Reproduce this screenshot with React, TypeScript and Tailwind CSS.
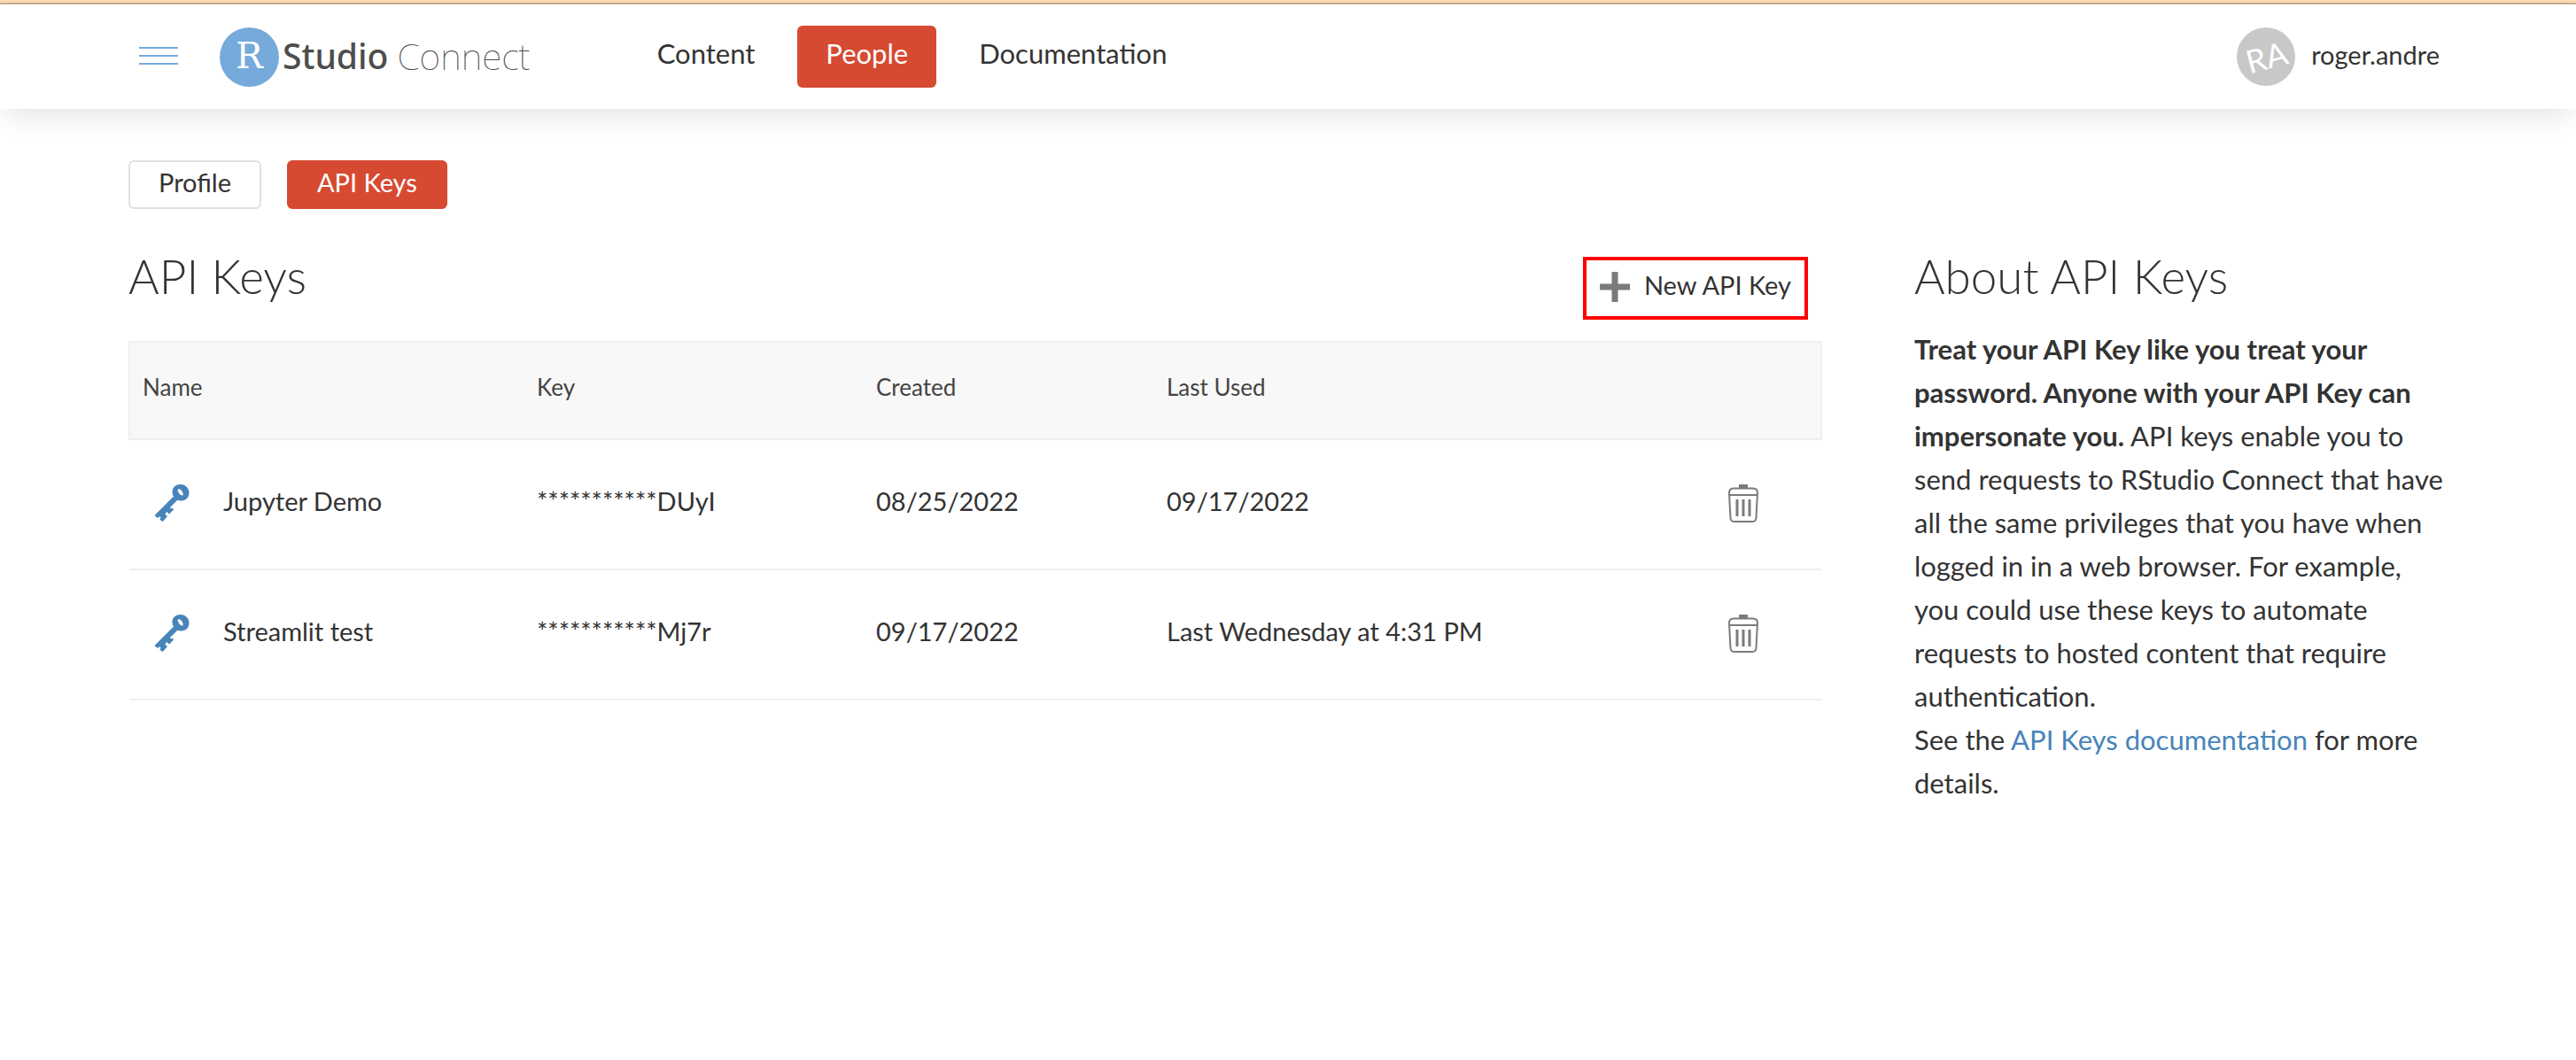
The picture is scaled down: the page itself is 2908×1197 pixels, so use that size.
import React from "react";

const keys = [
  { name: "Jupyter Demo", key: "***********DUyI", created: "08/25/2022", used: "09/17/2022" },
  { name: "Streamlit test", key: "***********Mj7r", created: "09/17/2022", used: "Last Wednesday at 4:31 PM" },
];

function KeyIcon() {
  return (
    <svg viewBox="0 0 40 42" className="h-[42px] w-10 shrink-0" fill="#4784ba" aria-hidden="true">
      <path
        fillRule="evenodd"
        d="M30 0C35.500 0 39.500 4.500 39.500 9.500S36 18.500 30.500 18.500 20.500 14 20.500 8.500 24.500 0 30 0zM27 5.500C25.500 7 29.500 13 32 12.500 34.500 11.500 30 3.500 27 5.500z"
      />
      <path d="M21.700 13.700L1 34.500V35.700L4.300 38 5.700 36.300 7.700 37.300 6.300 39.700 9.700 42 15 36 12.300 33.700 14.300 31 17 33.500 22 28.500 20.500 26.500 19 27.500 18 26 27 17z" />
    </svg>
  );
}

function TrashIcon() {
  return (
    <svg viewBox="0 0 34 44" className="h-11 w-[34px]" fill="none" stroke="#7b7b7b" strokeWidth="2" aria-hidden="true">
      <path d="M12 1h10v4H12z" fill="#7b7b7b" stroke="none" />
      <path d="M6 5.500h22q5 0 5 5l-1.500 28.500q-.5 4-4 4H6.500q-3.500 0-4-4L1 10.500q0-5 5-5z M1 13h32" />
      <path d="M10 18v19M17 18v19M24 18v19" strokeWidth="3" />
    </svg>
  );
}

export default function App() {
  return (
    <div className="min-h-screen bg-white font-['Lato',sans-serif] text-[#333]">
      <div className="h-[5px] border-b-2 border-[#c9ae8c] bg-[#ffdbb5]" />
      <header className="flex h-[118px] items-center pr-[154px] pl-[157px] shadow-[0_12px_30px_-6px_rgba(0,0,0,0.12)]">
        <button aria-label="Menu" className="flex flex-col gap-[7px] pb-0.5">
          <span className="h-0.5 w-11 bg-[#75aadb]" />
          <span className="h-0.5 w-11 bg-[#75aadb]" />
          <span className="h-0.5 w-11 bg-[#75aadb]" />
        </button>
        <a href="#" className="ml-[47px] flex items-center text-[#4d4d4d]">
          <span className="flex size-[67px] items-center justify-center rounded-full bg-[#75aadb] pb-0.5 font-['DejaVu_Serif',serif] text-[41px] leading-[60px] text-white">R</span>
          <span className="ml-1 pb-0.5 font-['Noto_Sans',sans-serif] text-[39px] leading-[60px] font-medium">Studio</span>
          <span className="ml-2.5 pb-0.5 font-['Noto_Sans',sans-serif] text-[41px] leading-[60px] font-thin">Connect</span>
        </a>
        <nav className="ml-[111px] flex items-center text-[31px] leading-[62px]">
          <a href="#" className="px-8 pb-2">Content</a>
          <a href="#" className="ml-4 rounded-md bg-[#d64a32] px-8 pb-2 text-white">People</a>
          <a href="#" className="ml-4 px-8 pb-2">Documentation</a>
        </nav>
        <a href="#" className="ml-auto flex items-center gap-[18px] text-[29px]">
          <span className="flex size-[66px] items-center justify-center rounded-full bg-[#c8c8c8]">
            <span className="-rotate-15 text-[36px] text-white">RA</span>
          </span>
          <span className="pb-1">roger.andre</span>
        </a>
      </header>

      <main className="px-[145px] pt-[58px]">
        <div className="flex gap-[29px] text-[29px] leading-[45px]">
          <button className="rounded-md border-2 border-[#e0e0e0] px-8 pb-1.5">Profile</button>
          <button className="rounded-md border-2 border-[#d64a32] bg-[#d64a32] px-8 pb-1.5 text-white">API Keys</button>
        </div>
        <div className="mt-[35px] flex gap-[104px]">
          <section className="flex-1">
            <div className="flex items-start justify-between pr-4">
              <h1 className="text-[53px] leading-[82px] font-light">API Keys</h1>
              <button className="mt-[19px] flex h-[71px] items-center gap-4 border-4 border-[#f00] px-[15px] text-[29px]">
                <svg viewBox="0 0 34 34" className="mb-1 size-[34px]" aria-hidden="true">
                  <path d="M17 0v34M0 17h34" stroke="#7b7b7b" strokeWidth="7" />
                </svg>
                <span className="pb-2">New API Key</span>
              </button>
            </div>
            <table className="mt-6 w-full table-fixed border-collapse text-left text-[29px]">
              <colgroup>
                <col className="w-[446px]" />
                <col className="w-[383px]" />
                <col className="w-[328px]" />
                <col />
                <col className="w-[123px]" />
              </colgroup>
              <thead className="border-2 border-[#efefef] bg-[#f8f8f8] text-[26px] text-[#444]">
                <tr className="h-[110px]">
                  <th className="pb-2 pl-[14px] font-normal">Name</th>
                  <th className="pb-2 pl-[14px] font-normal">Key</th>
                  <th className="pb-2 pl-[14px] font-normal">Created</th>
                  <th className="pb-2 pl-[14px] font-normal">Last Used</th>
                  <th aria-label="Actions" />
                </tr>
              </thead>
              <tbody>
                {keys.map((k) => (
                  <tr key={k.name} className="h-[147px] border-b-2 border-[#efefef]">
                    <td className="pb-1 pl-7">
                      <div className="flex items-center gap-[38px]">
                        <KeyIcon />
                        <span className="pb-1">{k.name}</span>
                      </div>
                    </td>
                    <td className="pb-2 pl-[14px]">{k.key}</td>
                    <td className="pb-2 pl-[14px]">{k.created}</td>
                    <td className="pb-2 pl-[14px]">{k.used}</td>
                    <td className="pb-1 pl-[18px]">
                      <button aria-label={"Delete " + k.name} className="block"><TrashIcon /></button>
                    </td>
                  </tr>
                ))}
              </tbody>
            </table>
          </section>
          <aside className="w-[602px]">
            <h2 className="text-[53px] leading-[82px] font-light">About API Keys</h2>
            <div className="mt-[17px] text-[31px] leading-[49px]">
              <p>
                <strong>Treat your API Key like you treat your password. Anyone with your API Key can impersonate you.</strong>{" "}
                API keys enable you to send requests to RStudio Connect that have all the same privileges that you have when
                logged in in a web browser. For example, you could use these keys to automate requests to hosted content that
                require authentication.
              </p>
              <p>
                See the <a href="#" className="text-[#4784ba]">API Keys documentation</a> for more details.
              </p>
            </div>
          </aside>
        </div>
      </main>
    </div>
  );
}
